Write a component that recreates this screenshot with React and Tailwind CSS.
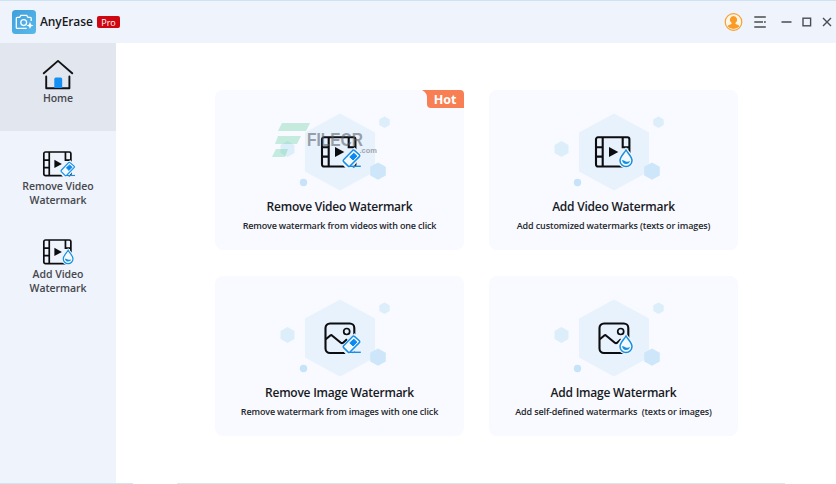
import React from "react";

function Eraser() {
  return (
    <g>
      <path d="M34.5 11.2 L42.5 19 L32 32.5 H26 L20 25.5 Z" fill="#eef4fc" />
      <path d="M32.6 14.4q.9-.9 1.8 0l4.9 4.400q.9.9 0 1.8l-9.3 9.500q-.9.9-1.8 0l-4.6-4.500q-.9-.9 0-1.8z" fill="#f4f9ff" stroke="#1590ea" strokeWidth="1.5" />
      <path d="M33.8 17.2l3.100 2.900-3.8 3.9-3.300-3.100z" fill="#0a8af0" stroke="#0a8af0" strokeWidth="1" />
      <path d="M30 30.300h10.8" stroke="#1590ea" strokeWidth="1.4" />
    </g>
  );
}

function Drop() {
  return (
    <g>
      <path d="M32 11.2C35 15.5 40.3 19.5 40.3 24.2a8.3 8.3 0 0 1-16.6 0C23.7 19.5 29 15.5 32 11.2z" fill="#eef4fc" />
      <path d="M32 14C34 17.6 38 20.6 38 24.6a6 6 0 0 1-12 0C26 20.6 30 17.6 32 14z" fill="#f4f9ff" stroke="#1590df" strokeWidth="1.5" />
      <path d="M28 24.1q2 .3 3.8 1.3 2 .9 4.2-.3-.8 2.9-4 2.9-3.2 0-4-3.9z" fill="#1590df" />
    </g>
  );
}

function Film() {
  return (
    <g fill="none" stroke="#0c0d10" strokeWidth="2.1">
      <rect x="2" y="1.3" width="33.4" height="29.2" rx="2" />
      <path d="M8.7 1.3v29M28.7 1.3v11M2 11.300h6.8M2 20.6h6.8M28.7 11.3h6.7" />
      <path d="M15 11l9.3 5-9.3 5z" fill="#0c0d10" stroke="none" />
    </g>
  );
}

function Picture() {
  return (
    <g fill="none" stroke="#0c0d10" strokeWidth="2.1" strokeLinejoin="round">
      <rect x="5.5" y="1.5" width="28.800" height="29.5" rx="4.5" />
      <circle cx="26.7" cy="9.5" r="3" strokeWidth="1.7" />
      <path d="M5.8 17.2l4.500-3.7q1-.7 2 .2l8.5 7q1.2 1 2.4 0l3.8-3.5" />
    </g>
  );
}

function Glyph({ kind, tool }) {
  return (
    <>
      {kind === "film" ? <Film /> : <Picture />}
      {tool === "erase" ? <Eraser /> : <Drop />}
    </>
  );
}

function SideItem({ label, icon, active }) {
  return (
    <div className={"flex h-[88px] w-full flex-col items-center pt-[17px] " + (active ? "bg-[#e2e6ef]" : "")}>
      <div className="flex h-[31px] w-full justify-center">{icon}</div>
      <div className="whitespace-pre text-center text-[10.5px] font-semibold leading-[14px] tracking-[-0.05px] text-[#45474d]">{label}</div>
    </div>
  );
}

function Card({ title, text, kind, tool, hot, tracking }) {
  return (
    <section className="relative flex h-[160px] w-[249px] flex-col items-center rounded-lg bg-[#f8faff]">
      <svg width="249" height="108" viewBox="0 0 249 108" className="shrink-0">
        <path d="M125 23.5l35 19v39l-35 19-35-19v-39z" fill="#e8f2fc" />
        <path d="M163 72.5l7.8 4.3v8.6l-7.8 4.3-7.8-4.3v-8.6z" fill="#cde6f9" />
        <path d="M72.5 51l7 4v8l-7 4-7-4v-8z" fill="#dceefa" />
        <path d="M169.5 27l4.7 2.6v5.2l-4.7 2.6-4.7-2.6v-5.2z" fill="#dceefa" stroke="#dceefa" strokeLinejoin="round" />
        <circle cx="88.5" cy="92.5" r="3.7" fill="#c6e3f9" />
        <g transform="translate(105 46)"><Glyph kind={kind} tool={tool} /></g>
        {hot && (
          <g>
            <path d="M67 33h28l-4 8H63zM63 46h23l-4 8H60zM61 59h12l-3 8H57z" fill="#6fd3a5" opacity=".38" />
            <text x="92" y="56" fontFamily="Liberation Sans" fontWeight="700" fontSize="17.500" textLength="56" lengthAdjust="spacingAndGlyphs" fill="#555b63" opacity=".55">FILECR</text>
            <text x="144.500" y="63" fontFamily="Liberation Sans" fontWeight="700" fontSize="8" textLength="17.500" lengthAdjust="spacingAndGlyphs" fill="#777d86" opacity=".65">.com</text>
          </g>
        )}
      </svg>
      <h2 className="whitespace-nowrap text-[12px] font-semibold leading-[18px] tracking-[-0.24px] text-[#17191e]">{title}</h2>
      <p className={"mt-[3px] whitespace-pre text-[9px] font-semibold leading-[13px] text-[#25272c] " + tracking}>{text}</p>
      {hot && (
        <div className="absolute right-0 top-0 flex h-[18px] w-[42px] items-center justify-center">
          <svg className="absolute inset-0" width="42" height="18" viewBox="0 0 42 18">
            <path d="M0 0h38q4 0 4 4v14H9q-4 0-4-4V7Q5 3 0 0z" fill="#f87f53" />
          </svg>
          <span className="relative left-[2px] top-[1px] text-[12.5px] font-bold leading-none text-white">Hot</span>
        </div>
      )}
    </section>
  );
}

export default function App() {
  return (
    <div className="flex h-[484px] w-[836px] flex-col overflow-hidden bg-white font-['Open_Sans',sans-serif]">
      <header className="flex h-[43px] shrink-0 items-center border-t border-[#cfe2f2] bg-[#eff3fb] pl-[12px]">
        <svg width="24" height="24" viewBox="0 0 24 24">
          <defs>
            <linearGradient id="logo" x1="0" y1="0" x2="1" y2="1">
              <stop offset="0" stopColor="#3e9fdc" />
              <stop offset="1" stopColor="#5ab9ea" />
            </linearGradient>
          </defs>
          <rect width="24" height="24" rx="3.500" fill="url(#logo)" />
          <g fill="none" stroke="#fff" strokeWidth="1.300">
            <path d="M19.200 11V8.200q0-.900-.900-.900H16l-1.300-2H8.900l-1.300 2H5.200q-.900 0-.900.900v9.300q0 .900.900.900h9.500" />
            <circle cx="11.700" cy="12.600" r="2.900" />
          </g>
          <path d="M18 11.800l1 2.600 2.500 1-2.500 1-1 2.600-1-2.600-2.500-1 2.500-1z" fill="#fff" />
        </svg>
        <span className="ml-[4px] w-[53px] whitespace-nowrap text-[12px] font-semibold leading-none tracking-[-0.1px] text-[#17191e]">AnyErase</span>
        <span className="ml-[4px] flex h-[12px] w-[23px] items-center justify-center rounded-[2px] bg-[#cf0712] text-[9px] leading-none text-white">Pro</span>
        <div className="ml-auto flex items-center">
          <svg width="112" height="20" viewBox="0 0 112 20">
            <circle cx="9.500" cy="10" r="8.300" fill="#fff6e9" stroke="#f7a033" strokeWidth="1.200" />
            <path d="M9.500 4a3.700 3.700 0 0 0-2 6.800v1.200q-3.500.700-4 2.300 2.400 2.700 6 2.700t6-2.700q-.500-1.600-4-2.300v-1.200a3.700 3.700 0 0 0-2-6.800z" fill="#f99b25" />
            <g fill="none" stroke="#4a4d52" strokeWidth="1.400">
              <path d="M30.300 5h11.500M30.300 10h8.700M40 10h1.800M30.300 15h11.500M57.500 10h10M99 6l8 8M107 6l-8 8" />
              <rect x="79" y="6.200" width="7.600" height="7.600" />
            </g>
          </svg>
        </div>
      </header>
      <div className="flex h-[440px] shrink-0">
        <aside className="w-[116px] bg-[#eff3fb]">
          <SideItem active label="Home" icon={
            <svg width="32" height="31" viewBox="0.500 0 32 31" fill="none" stroke="#101217" strokeWidth="1.900">
              <path d="M2.300 13.300L16.500.900l14.200 12.400M4.700 16.500v11.700h23.200V16.500" strokeLinecap="round" strokeLinejoin="round" />
              <path d="M12.800 28V19q0-1.500 1.500-1.500h4.900q1.500 0 1.500 1.500v9z" fill="#168ff2" stroke="none" />
            </svg>
          } />
          <SideItem label={"Remove Video\nWatermark"} icon={
            <svg width="34" height="31" viewBox="-1.500 -2.500 42 36"><Glyph kind="film" tool="erase" /></svg>
          } />
          <SideItem label={"Add Video\nWatermark"} icon={
            <svg width="34" height="31" viewBox="-1.500 -2.500 42 36"><Glyph kind="film" tool="drop" /></svg>
          } />
        </aside>
        <main className="grid grid-cols-[249px_249px] grid-rows-[160px_160px] gap-x-[25px] gap-y-[26px] pl-[99px] pt-[47px]">
          <Card kind="film" tool="erase" hot tracking="tracking-[-0.17px]" title="Remove Video Watermark" text="Remove watermark from videos with one click" />
          <Card kind="film" tool="drop" tracking="tracking-[-0.12px]" title="Add Video Watermark" text="Add customized watermarks (texts or images)" />
          <Card kind="picture" tool="erase" tracking="tracking-[-0.15px]" title="Remove Image Watermark" text="Remove watermark from images with one click" />
          <Card kind="picture" tool="drop" tracking="tracking-[-0.13px]" title="Add Image Watermark" text="Add self-defined watermarks  (texts or images)" />
        </main>
      </div>
      <footer className="flex h-px shrink-0">
        <div className="w-[133px] bg-[#cfe5ef]" />
        <div className="ml-[44px] w-[608px] bg-[#d6e8ec]" />
      </footer>
    </div>
  );
}
